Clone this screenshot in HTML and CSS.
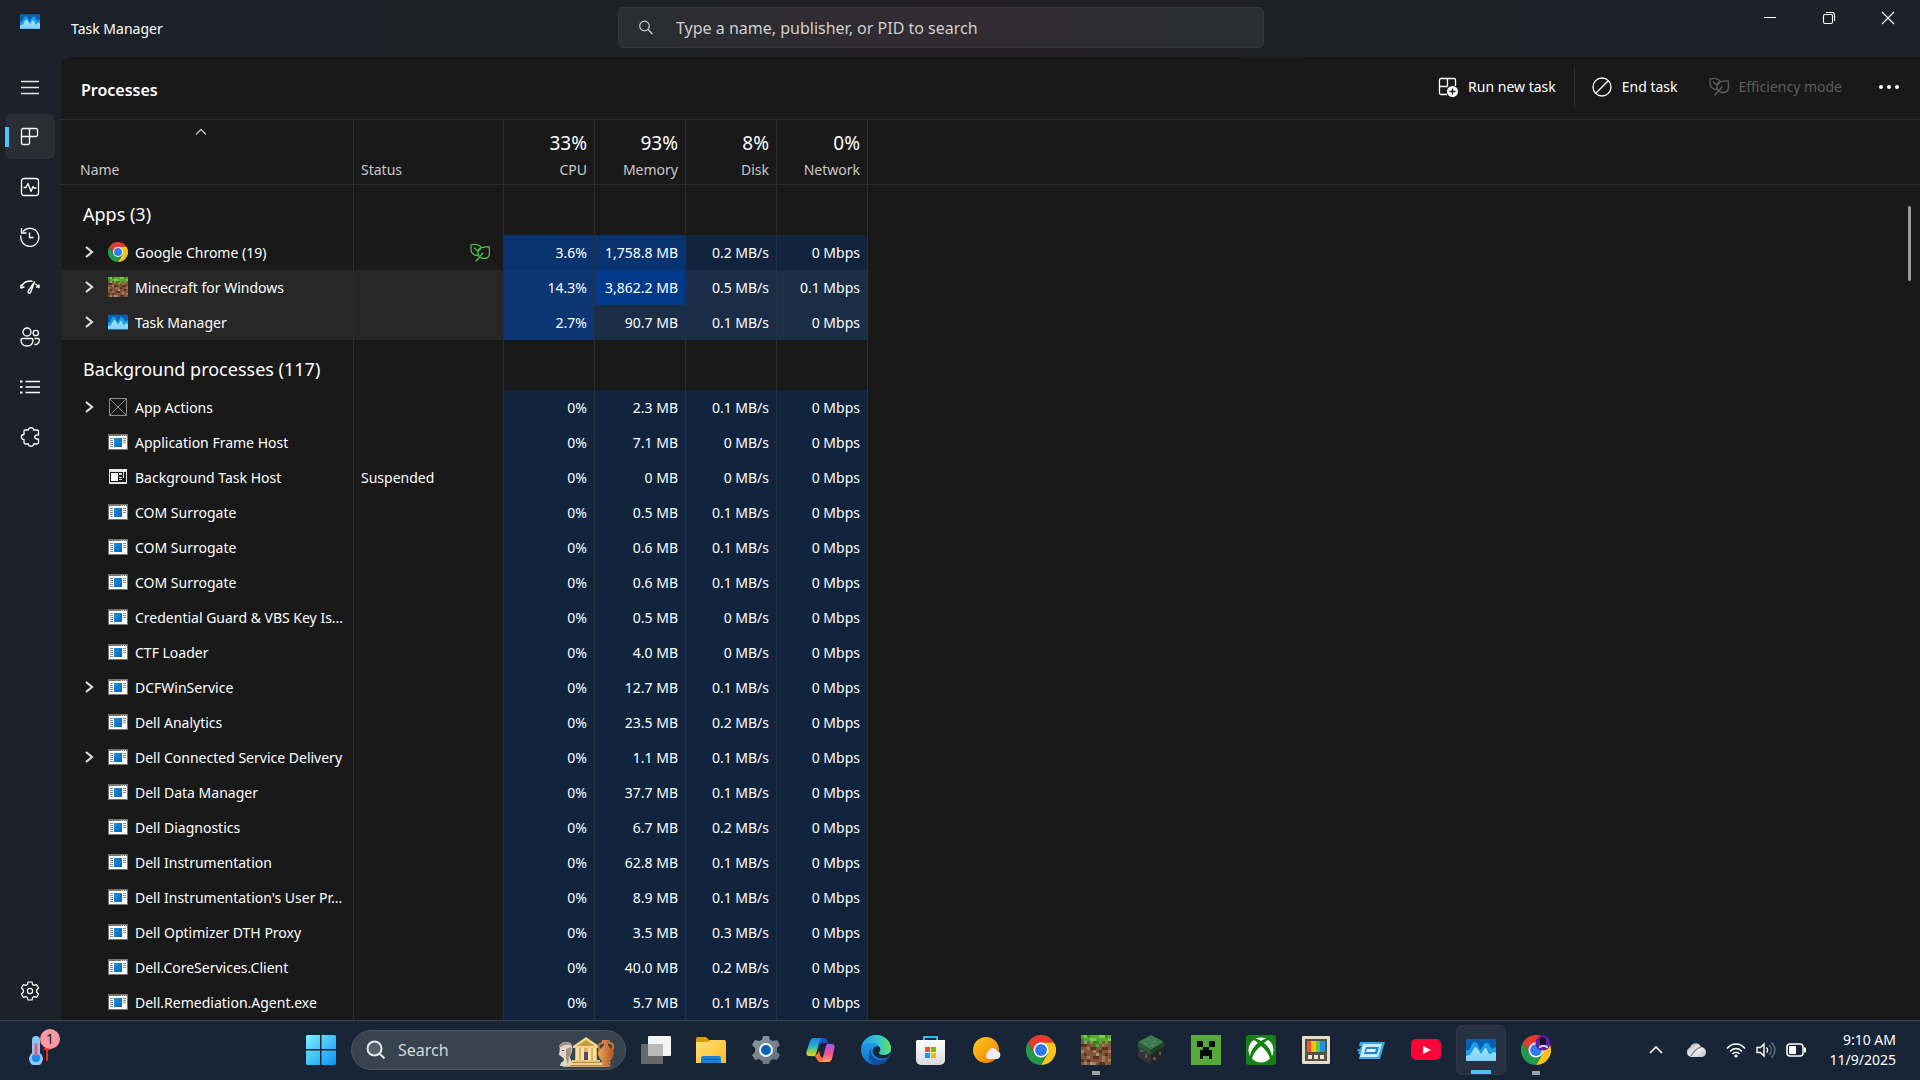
FILE: index.html
```
<!DOCTYPE html>
<html lang="en">
<head>
<meta charset="utf-8">
<title>Task Manager</title>
<link rel="stylesheet" href="styles.css">
</head>
<body>
<svg class="sprite" width="0" height="0" aria-hidden="true">
  <defs>
    <linearGradient id="g-tm" x1="0" y1="0" x2="0" y2="1"><stop offset="0" stop-color="#0a62b8"/><stop offset="1" stop-color="#0a55a5"/></linearGradient>
    <linearGradient id="g-tm2" x1="0" y1="0" x2="0" y2="1"><stop offset="0" stop-color="#a8e4ff"/><stop offset="1" stop-color="#7fd0fb"/></linearGradient>
    <linearGradient id="g-win" x1="0" y1="0" x2="1" y2="1"><stop offset="0" stop-color="#1c94e4"/><stop offset="1" stop-color="#0463b8"/></linearGradient>
    <linearGradient id="g-start" x1="0" y1="0" x2="30" y2="30" gradientUnits="userSpaceOnUse"><stop offset="0" stop-color="#7df0fd"/><stop offset="1" stop-color="#0a94f8"/></linearGradient>
    <linearGradient id="g-folder" x1="0" y1="0" x2="1" y2="1"><stop offset="0" stop-color="#ffe07a"/><stop offset="1" stop-color="#fcbd2a"/></linearGradient>
    <linearGradient id="g-gear" x1="0" y1="0" x2="1" y2="1"><stop offset="0" stop-color="#939da6"/><stop offset="1" stop-color="#5d6973"/></linearGradient>
    <linearGradient id="g-edge1" x1="0" y1="0" x2="1" y2="0"><stop offset="0" stop-color="#1f9be0"/><stop offset=".55" stop-color="#2cc3cf"/><stop offset="1" stop-color="#66e35e"/></linearGradient>
    <linearGradient id="g-edge2" x1="0" y1="0" x2="0" y2="1"><stop offset="0" stop-color="#2aa6ea"/><stop offset="1" stop-color="#0b6fd0"/></linearGradient>
    <linearGradient id="g-cop1" x1="0" y1="0" x2="0" y2="1"><stop offset="0" stop-color="#1a85e8"/><stop offset=".45" stop-color="#23b5c9"/><stop offset=".75" stop-color="#8fd04e"/><stop offset="1" stop-color="#f4cf1c"/></linearGradient>
    <linearGradient id="g-cop2" x1="0" y1="0" x2="0" y2="1"><stop offset="0" stop-color="#a654f0"/><stop offset=".5" stop-color="#ee4f9c"/><stop offset="1" stop-color="#fda24f"/></linearGradient>
    <linearGradient id="g-sun" x1="0" y1="0" x2="1" y2="1"><stop offset="0" stop-color="#ffd21a"/><stop offset="1" stop-color="#ef7407"/></linearGradient>
    <linearGradient id="g-store" x1="0" y1="0" x2="0" y2="1"><stop offset="0" stop-color="#ffffff"/><stop offset="1" stop-color="#d9dadc"/></linearGradient>
    <linearGradient id="g-cloud" x1="0" y1="0" x2="1" y2="1"><stop offset="0" stop-color="#9a9c9e"/><stop offset=".5" stop-color="#f2f2f2"/><stop offset="1" stop-color="#b9bbbd"/></linearGradient>
    <linearGradient id="g-vase" x1="0" y1="0" x2="1" y2="0"><stop offset="0" stop-color="#f2a25f"/><stop offset="1" stop-color="#a9551f"/></linearGradient>
  </defs>
  <symbol id="i-tm" viewBox="0 0 30 22">
    <path fill="url(#g-tm)" d="M1 0h28l1 1v20l-1 1H1l-1-1V1z"/>
    <path fill="#1d9fe6" d="M0 11h3l3-6 2-2 3 1 3 7 5-7h3l4 6 4-2v14H0z"/>
    <path fill="url(#g-tm2)" d="M0 17l4-1 5-8 2 1 4 6 4-6h1l3 6h2l2-2 3 1v8H0z"/>
  </symbol>
  <symbol id="i-win" viewBox="0 0 20 16">
    <path fill="#fff" d="M0 0h20v16H0z"/><path fill="#77746f" d="M0 0h20v2H0zM0 2h1v14H0zM19 2h1v14h-1zM1 15h18v1H1z"/>
    <path fill="#d0d0d0" d="M13 1h1v1h-1zM15 1h1v1h-1zM17 1h1v1h-1z"/>
    <path fill="#8d8d8d" d="M2 4h3v1H2zM2 6h3v1H2zM2 8h3v1H2zM2 10h3v1H2zM2 12h3v1H2zM15 4h3v1h-3zM15 6h3v1h-3zM15 8h3v1h-3z"/>
    <path fill="url(#g-win)" d="M6 4h8v9H6z"/>
  </symbol>
  <symbol id="i-host" viewBox="0 0 20 16">
    <path fill="#e9e9e9" d="M1 0h18v15H1z"/><path fill="#1a1a1a" d="M2 3h16v10H2z"/><path fill="#fff" d="M3 4h7v8H3z"/><path fill="#d8d8d8" d="M11 4h3v2h-3zM11 8h3v1h-3zM11 10h3v1h-3zM15 3h1v6h-1zM2 13h16v1H2z"/>
  </symbol>
  <symbol id="i-blank" viewBox="0 0 20 20">
    <path fill="none" stroke="#8c8c8c" d="M1.500 1.500h17v17h-17zM2 2l16 16M18 2L2 18"/>
  </symbol>
  <symbol id="i-chrome" viewBox="0 0 48 48">
    <path fill="#e33b2e" d="M3.200 12L13.600 30 24 12h20.800A24 24 0 0 0 3.200 12z"/>
    <path fill="#fcc31e" d="M44.800 12A24 24 0 0 1 24 48l10.400-18L24 12z"/>
    <path fill="#239a4b" d="M3.200 12A24 24 0 0 0 24 48l10.400-18L24 34 13.600 30z"/>
    <circle cx="24" cy="24" r="12" fill="#fff"/><circle cx="24" cy="24" r="9.500" fill="#2f7bed"/>
  </symbol>
  <symbol id="i-grass" viewBox="0 0 10 10">
    <g shape-rendering="crispEdges"><path fill="#80563b" d="M0 0h10v10H0z"/>
    <path fill="#55a832" d="M0 0h10v2H9v1H8V2H7v1H6v1H5V2H4v1H3V2H0z"/>
    <path fill="#7cc94c" d="M1 0h1v1H1zM3 1h2v1H3zM6 0h2v1H6zM9 1h1v1H9z"/>
    <path fill="#3c8a25" d="M2 0h1v1H2zM5 2h1v1H5zM8 0h1v1H8zM0 1h1v1H0z"/>
    <path fill="#553521" d="M0 3h2v1H0zM3 4h2v1H3zM7 4h2v1H7zM1 6h1v1H1zM4 7h2v1H4zM8 6h1v1H8zM0 8h1v1H0zM6 9h2v1H6zM2 8h1v1H2zM6 5h1v1H6z"/>
    <path fill="#a87752" d="M2 4h1v1H2zM4 5h1v1H4zM0 5h1v1H0zM7 3h1v1H7zM9 5h1v1H9zM2 7h1v1H2zM7 7h1v2H7zM4 9h1v1H4zM9 8h1v1H9zM1 9h1v1H1z"/>
    <path fill="#9b9490" d="M1 2h1v1H1zM5 6h1v1H5zM3 9h1v1H3z"/></g>
  </symbol>
  <symbol id="i-chev" viewBox="0 0 10 12"><path fill="none" stroke="#dcdcdc" stroke-width="2.200" d="M1 1l6 5-6 5"/></symbol>
  <symbol id="i-leaf" viewBox="0 0 20 20">
    <path fill="none" stroke="currentColor" stroke-width="1.300" stroke-linecap="round" stroke-linejoin="round" d="M7 12.500C3.500 12 1 9.500 1 6V2C3.500 1 6 1.200 8 2c1.500.6 2.500 1.200 3.200 2.200M4.500 5l3.500 3.500V12M8 8.500L10.500 6M19.300 4c-2.500-.6-4.500.1-6.300.3-3 .2-5 2-5 5 0 4.200 2.500 6.200 6 6.200 3.700 0 5.500-2.500 5.500-6zM6 18l7-8"/>
  </symbol>
</svg>

<div class="app">
  <header class="titlebar">
    <div class="brand">
      <svg width="20" height="15"><use href="#i-tm"/></svg>
      <span>Task Manager</span>
    </div>
    <label class="search">
      <svg width="16" height="16" viewBox="0 0 16 16" fill="none" stroke="#cfcfcf" stroke-width="1.200"><circle cx="6.500" cy="6" r="4.800"/><path d="M10 9.500l4.500 4.500"/></svg>
      <input type="text" aria-label="Search processes" placeholder="Type a name, publisher, or PID to search">
    </label>
    <div class="win-buttons">
      <button aria-label="Minimize"><svg width="14" height="14" viewBox="0 0 14 14"><path fill="#fff" d="M1 6h12v1H1z"/></svg></button>
      <button aria-label="Restore"><svg width="14" height="14" viewBox="0 0 14 14" fill="none" stroke="#fff" stroke-width="1.100"><rect x="1.500" y="3.500" width="9" height="9" rx="1.500"/><path d="M4 1.500h6a2.500 2.500 0 0 1 2.500 2.500v6"/></svg></button>
      <button aria-label="Close"><svg width="14" height="14" viewBox="0 0 14 14" stroke="#fff" stroke-width="1.200"><path d="M1 1l12 12M13 1L1 13"/></svg></button>
    </div>
  </header>

  <div class="body">
    <nav class="rail" aria-label="Pages">
      <button class="rail-item" aria-label="Open navigation"><svg width="20" height="20" viewBox="0 0 20 20"><path fill="none" stroke="#e8e8e8" stroke-width="1.300" d="M1 4.500h18M1 10.500h18M1 16.500h18"/></svg></button>
      <button class="rail-item active" aria-label="Processes"><svg width="20" height="20" viewBox="0 0 20 20" fill="none" stroke="#fff" stroke-width="1.300"><path d="M3 1.500h13a1.500 1.500 0 0 1 1.500 1.500v5A1.500 1.500 0 0 1 16 9.500H9.500V16A1.500 1.500 0 0 1 8 17.500H3A1.500 1.500 0 0 1 1.500 16V3A1.500 1.500 0 0 1 3 1.500zM9.500 1.500v8h-8"/></svg></button>
      <button class="rail-item" aria-label="Performance"><svg width="20" height="20" viewBox="0 0 20 20" fill="none" stroke="#fff" stroke-width="1.300" stroke-linejoin="round"><rect x="1.500" y="1.500" width="17" height="17" rx="2.500"/><path d="M3.500 10.500h2.500l2-4 3 8 2-5 1 1.500h2.500"/></svg></button>
      <button class="rail-item" aria-label="App history"><svg width="20" height="20" viewBox="0 0 20 20" fill="none" stroke="#fff" stroke-width="1.300"><path d="M1 8.500A9 9 0 1 0 3 4.500M1.500 1v5h5M9.500 5.500v5h4"/></svg></button>
      <button class="rail-item" aria-label="Startup apps"><svg width="20" height="20" viewBox="0 0 20 20" fill="none" stroke="#fff" stroke-width="1.400" stroke-linecap="round" stroke-linejoin="round"><path d="M1 10.500C3 5.500 7 3.500 12 4.200M1 8v3l3-1M14.500 5L8.300 14c-.7 1.200.6 3 1.900 1.800.8-.8 2.600-6.800 4.300-10.800zM15.500 7c1.500.8 2.500 2 3.500 3.700M16.500 10h2.500V8"/></svg></button>
      <button class="rail-item" aria-label="Users"><svg width="20" height="20" viewBox="0 0 20 20" fill="none" stroke="#fff" stroke-width="1.300"><circle cx="7" cy="5" r="4"/><circle cx="15.800" cy="6" r="2.700"/><path d="M2.500 11.500h9A1.500 1.500 0 0 1 13 13c0 4-2.500 6-6 6s-6-2-6-6a1.500 1.500 0 0 1 1.500-1.500zM14.500 11.500h3.700a1.200 1.200 0 0 1 1.200 1.200c0 3.300-2 5-5 4.800"/></svg></button>
      <button class="rail-item" aria-label="Details"><svg width="20" height="20" viewBox="0 0 20 20"><path fill="none" stroke="#fff" stroke-width="1.300" d="M5.500 4.500h14.500M5.500 10h14.500M5.500 15.500h14.500"/><path fill="#fff" d="M0 3.500h2.500v2H0zM0 9h2.500v2H0zM0 14.500h2.500v2H0z"/></svg></button>
      <button class="rail-item" aria-label="Services"><svg width="20" height="20" viewBox="0 0 20 20" fill="none" stroke="#fff" stroke-width="1.300" stroke-linejoin="round"><path d="M5 3h3.500c-.5-3 5.500-3 5 0H17a1.500 1.500 0 0 1 1.500 1.500V8c-5-1-5 5 0 4v3.500A1.500 1.500 0 0 1 17 17h-3.500c.5 3-5.500 3-5 0H5.500A1.500 1.500 0 0 1 4 15.500V12.500c-3.500 0-3.500-5 0-5V4a1 1 0 0 1 1-1z"/></svg></button>
      <button class="rail-item last" aria-label="Settings"><svg width="20" height="20" viewBox="0 0 20 20" fill="none" stroke="#fff" stroke-width="1.200" stroke-linejoin="round"><path d="M8 1h4l.6 2.500 1.500.9 2.500-.8 2 3.400-1.900 1.800v2.400l1.900 1.800-2 3.400-2.500-.8-1.500.9L12 19H8l-.6-2.500-1.500-.9-2.500.8-2-3.400 1.900-1.800V8.800L1.400 7l2-3.400 2.500.8 1.500-.9z"/><circle cx="10" cy="10" r="2.600"/></svg></button>
    </nav>

    <main class="panel">
      <div class="toolbar">
        <h1>Processes</h1>
        <button class="tool"><svg width="20" height="20" viewBox="0 0 20 20" fill="none" stroke="#fff" stroke-width="1.300"><path d="M9 17.500H3A1.500 1.500 0 0 1 1.500 16V3A1.500 1.500 0 0 1 3 1.500h13A1.500 1.500 0 0 1 17.500 3v6M9.500 1.500v8M1.500 9.500h8"/><circle cx="14.500" cy="14.500" r="5.500" fill="#fff" stroke="none"/><path stroke="#191919" d="M11.500 14.500h6M14.500 11.500v6"/></svg>Run new task</button>
        <span class="divider"></span>
        <button class="tool"><svg width="20" height="20" viewBox="0 0 20 20" fill="none" stroke="#fff" stroke-width="1.300"><circle cx="10" cy="10" r="9"/><path d="M3.800 16.200L16.200 3.800"/></svg>End task</button>
        <button class="tool" disabled><svg width="20" height="20"><use href="#i-leaf"/></svg>Efficiency mode</button>
        <button class="more" aria-label="More options"><svg width="20" height="20" viewBox="0 0 20 20" fill="#fff"><circle cx="2" cy="10" r="2"/><circle cx="10" cy="10" r="2"/><circle cx="18" cy="10" r="2"/></svg></button>
      </div>

      <div class="list">
        <table>
          <colgroup><col class="c-name"><col class="c-status"><col class="c-num"><col class="c-num"><col class="c-num"><col class="c-num"><col></colgroup>
          <thead><tr>
            <th class="name"><svg class="sort" width="12" height="8" viewBox="0 0 12 8"><path fill="none" stroke="#c4c4c4" stroke-width="1.300" d="M1 6.500l5-5 5 5"/></svg>Name</th>
            <th>Status</th>
            <th class="num"><b>33%</b>CPU</th><th class="num"><b>93%</b>Memory</th><th class="num"><b>8%</b>Disk</th><th class="num"><b>0%</b>Network</th><td></td>
          </tr></thead>
          <tbody>
            <tr class="group"><th>Apps (3)</th><td></td><td></td><td></td><td></td><td></td><td></td></tr>
            <tr><td><div class="cell"><svg class="chev" width="10" height="12"><use href="#i-chev"/></svg><svg width="20" height="20"><use href="#i-chrome"/></svg><span>Google Chrome (19)</span></div></td><td><svg class="eco" width="20" height="20"><use href="#i-leaf"/></svg></td><td class="mid">3.6%</td><td class="mid">1,758.8 MB</td><td class="low">0.2 MB/s</td><td class="low">0 Mbps</td><td></td></tr>
            <tr class="lit"><td><div class="cell"><svg class="chev" width="10" height="12"><use href="#i-chev"/></svg><svg width="20" height="20"><use href="#i-grass"/></svg><span>Minecraft for Windows</span></div></td><td></td><td class="mid">14.3%</td><td class="high">3,862.2 MB</td><td class="low">0.5 MB/s</td><td class="low">0.1 Mbps</td><td></td></tr>
            <tr class="lit"><td><div class="cell"><svg class="chev" width="10" height="12"><use href="#i-chev"/></svg><svg width="20" height="16" viewBox="0 0 20 16"><use href="#i-tm"/></svg><span>Task Manager</span></div></td><td></td><td class="mid">2.7%</td><td class="low">90.7 MB</td><td class="low">0.1 MB/s</td><td class="low">0 Mbps</td><td></td></tr>
            <tr class="group"><th>Background processes (117)</th><td></td><td></td><td></td><td></td><td></td><td></td></tr>
            <tr><td><div class="cell"><svg class="chev" width="10" height="12"><use href="#i-chev"/></svg><svg width="20" height="20"><use href="#i-blank"/></svg><span>App Actions</span></div></td><td></td><td class="low">0%</td><td class="low">2.3 MB</td><td class="low">0.1 MB/s</td><td class="low">0 Mbps</td><td></td></tr>
            <tr><td><div class="cell single"><svg width="20" height="16"><use href="#i-win"/></svg><span>Application Frame Host</span></div></td><td></td><td class="low">0%</td><td class="low">7.1 MB</td><td class="low">0 MB/s</td><td class="low">0 Mbps</td><td></td></tr>
            <tr><td><div class="cell single"><svg width="20" height="16"><use href="#i-host"/></svg><span>Background Task Host</span></div></td><td>Suspended</td><td class="low">0%</td><td class="low">0 MB</td><td class="low">0 MB/s</td><td class="low">0 Mbps</td><td></td></tr>
            <tr><td><div class="cell single"><svg width="20" height="16"><use href="#i-win"/></svg><span>COM Surrogate</span></div></td><td></td><td class="low">0%</td><td class="low">0.5 MB</td><td class="low">0.1 MB/s</td><td class="low">0 Mbps</td><td></td></tr>
            <tr><td><div class="cell single"><svg width="20" height="16"><use href="#i-win"/></svg><span>COM Surrogate</span></div></td><td></td><td class="low">0%</td><td class="low">0.6 MB</td><td class="low">0.1 MB/s</td><td class="low">0 Mbps</td><td></td></tr>
            <tr><td><div class="cell single"><svg width="20" height="16"><use href="#i-win"/></svg><span>COM Surrogate</span></div></td><td></td><td class="low">0%</td><td class="low">0.6 MB</td><td class="low">0.1 MB/s</td><td class="low">0 Mbps</td><td></td></tr>
            <tr><td><div class="cell single"><svg width="20" height="16"><use href="#i-win"/></svg><span>Credential Guard &amp; VBS Key Is...</span></div></td><td></td><td class="low">0%</td><td class="low">0.5 MB</td><td class="low">0 MB/s</td><td class="low">0 Mbps</td><td></td></tr>
            <tr><td><div class="cell single"><svg width="20" height="16"><use href="#i-win"/></svg><span>CTF Loader</span></div></td><td></td><td class="low">0%</td><td class="low">4.0 MB</td><td class="low">0 MB/s</td><td class="low">0 Mbps</td><td></td></tr>
            <tr><td><div class="cell"><svg class="chev" width="10" height="12"><use href="#i-chev"/></svg><svg width="20" height="16"><use href="#i-win"/></svg><span>DCFWinService</span></div></td><td></td><td class="low">0%</td><td class="low">12.7 MB</td><td class="low">0.1 MB/s</td><td class="low">0 Mbps</td><td></td></tr>
            <tr><td><div class="cell single"><svg width="20" height="16"><use href="#i-win"/></svg><span>Dell Analytics</span></div></td><td></td><td class="low">0%</td><td class="low">23.5 MB</td><td class="low">0.2 MB/s</td><td class="low">0 Mbps</td><td></td></tr>
            <tr><td><div class="cell"><svg class="chev" width="10" height="12"><use href="#i-chev"/></svg><svg width="20" height="16"><use href="#i-win"/></svg><span>Dell Connected Service Delivery</span></div></td><td></td><td class="low">0%</td><td class="low">1.1 MB</td><td class="low">0.1 MB/s</td><td class="low">0 Mbps</td><td></td></tr>
            <tr><td><div class="cell single"><svg width="20" height="16"><use href="#i-win"/></svg><span>Dell Data Manager</span></div></td><td></td><td class="low">0%</td><td class="low">37.7 MB</td><td class="low">0.1 MB/s</td><td class="low">0 Mbps</td><td></td></tr>
            <tr><td><div class="cell single"><svg width="20" height="16"><use href="#i-win"/></svg><span>Dell Diagnostics</span></div></td><td></td><td class="low">0%</td><td class="low">6.7 MB</td><td class="low">0.2 MB/s</td><td class="low">0 Mbps</td><td></td></tr>
            <tr><td><div class="cell single"><svg width="20" height="16"><use href="#i-win"/></svg><span>Dell Instrumentation</span></div></td><td></td><td class="low">0%</td><td class="low">62.8 MB</td><td class="low">0.1 MB/s</td><td class="low">0 Mbps</td><td></td></tr>
            <tr><td><div class="cell single"><svg width="20" height="16"><use href="#i-win"/></svg><span>Dell Instrumentation's User Pr...</span></div></td><td></td><td class="low">0%</td><td class="low">8.9 MB</td><td class="low">0.1 MB/s</td><td class="low">0 Mbps</td><td></td></tr>
            <tr><td><div class="cell single"><svg width="20" height="16"><use href="#i-win"/></svg><span>Dell Optimizer DTH Proxy</span></div></td><td></td><td class="low">0%</td><td class="low">3.5 MB</td><td class="low">0.3 MB/s</td><td class="low">0 Mbps</td><td></td></tr>
            <tr><td><div class="cell single"><svg width="20" height="16"><use href="#i-win"/></svg><span>Dell.CoreServices.Client</span></div></td><td></td><td class="low">0%</td><td class="low">40.0 MB</td><td class="low">0.2 MB/s</td><td class="low">0 Mbps</td><td></td></tr>
            <tr><td><div class="cell single"><svg width="20" height="16"><use href="#i-win"/></svg><span>Dell.Remediation.Agent.exe</span></div></td><td></td><td class="low">0%</td><td class="low">5.7 MB</td><td class="low">0.1 MB/s</td><td class="low">0 Mbps</td><td></td></tr>
          </tbody>
        </table>
        <div class="scrollbar"></div>
      </div>
    </main>
  </div>

  <footer class="taskbar">
    <button class="weather" aria-label="Weather, 1 alert">
      <svg width="24" height="30" viewBox="0 0 24 30"><path fill="#8cc4fb" d="M3 5a4 4 0 0 1 8 0v13a7 7 0 1 1-8 0z"/><circle cx="7" cy="23" r="4" fill="#1a8ae6"/><rect x="5.500" y="8" width="3" height="13" rx="1.500" fill="#ef5a6e"/><path fill="#f5261d" d="M17 26h2V15h3l-4-5-4 5h3z"/></svg>
      <span class="badge">1</span>
    </button>

    <div class="dock">
      <button class="task" aria-label="Start"><svg width="30" height="30" viewBox="0 0 30 30"><path fill="url(#g-start)" d="M1 0h13v14H0V1zM15.500 0H29l1 1v13H15.500zM0 15.500h14V30H1l-1-1zM15.500 15.500H30V29l-1 1H15.500z"/></svg></button>
      <label class="pill">
        <svg width="20" height="20" viewBox="0 0 20 20" fill="none" stroke="#e4e7ea" stroke-width="2"><circle cx="8.500" cy="8.500" r="7" fill="#56606b"/><path d="M13.500 13.500l5 5"/></svg>
        <input type="text" aria-label="Search" placeholder="Search">
        <svg width="58" height="40" viewBox="0 0 58 40">
          <path fill="#cba56f" d="M3 32h50l-4 5H5z"/>
          <path fill="#dcd5c9" d="M2 36c0-4 4-4 4-7l-2-2-3-2 1-8c1-6 11-7 12-1 1 5-1 8-2 11 0 3 3 4 3 9z"/><path fill="#a1927e" d="M8 19l5-2c1 4 0 8-2 10l-1 8-2-7zM1 16c2-5 9-6 12-1-4-1-8 0-12 3z"/><path fill="#4e4a46" d="M4 20h2v1H4z"/>
          <path fill="#f3d58a" d="M15 16l13-9 13 9v2H15z"/><path fill="#c99b4a" d="M19 16l9-6 9 6z"/><path fill="#d9b365" d="M17 18h22v13H17z"/><path fill="#f7e2a3" d="M18 18h3v13h-3zM23 18h3v13h-3zM30 18h3v13h-3zM35 18h3v13h-3z"/><path fill="#5c4573" d="M26 22h4v9h-4z"/><path fill="#eac57b" d="M14 30h28v3H14z"/><path fill="#b98b45" d="M14 32h28v1H14zM12 35h32v1H12z"/><path fill="#f0cf86" d="M12 33h32v2H12z"/>
          <path fill="none" stroke="#c9763a" stroke-width="2" d="M45 13c-5 0-5 4-3 7M51 13c5 0 5 4 3 7"/><path fill="url(#g-vase)" d="M44 10h8v2l-2 2c0 4 6 4 6 9s-4 7-5 10l2 4h-10l2-4c-1-3-5-5-5-10s6-5 6-9l-2-2z"/>
        </svg>
      </label>
      <button class="task" aria-label="Task view"><svg width="30" height="30" viewBox="0 0 30 30"><rect y="9" width="22" height="20" rx="1" fill="#686868"/><rect x="7" y="1" width="23" height="20" rx="1" fill="#f4f4f4"/><path fill="#b9b9b9" d="M7 9h15v12H8l-1-1z"/></svg></button>
      <button class="task" aria-label="File Explorer"><svg width="30" height="30" viewBox="0 0 30 30"><path fill="#dd9a07" d="M0 4a2 2 0 0 1 2-2h8l3 3v4H0z"/><path fill="url(#g-folder)" d="M0 7h12l2-2h14a2 2 0 0 1 2 2v21H0z"/><path fill="#1282d8" d="M5 28v-5a2 2 0 0 1 2-2h16a2 2 0 0 1 2 2v5z"/><path fill="#0b57a0" d="M8 24h14v1H8z"/></svg></button>
      <button class="task" aria-label="Settings"><svg width="30" height="30" viewBox="0 0 30 30"><path fill="url(#g-gear)" d="M12 1h6l1 4 3 1 4-1 3 5-3 3v4l3 3-3 5-4-1-3 2-1 3h-6l-1-3-3-2-4 1-3-5 3-3v-4l-3-3 3-5 4 1 3-1z"/><circle cx="15" cy="15" r="7" fill="#f0f3f5"/><circle cx="15" cy="15" r="5" fill="#0c64b4"/></svg></button>
      <button class="task" aria-label="Copilot"><svg width="30" height="30" viewBox="0 0 30 30"><path fill="#1654c9" d="M8 3h10c2 0 3 2 4 5h-6c-2 0-3 2-3 4z"/><path fill="url(#g-cop1)" d="M8 3h8c-3 1-3 5-4 9l-2 7c-1 3-2 2-7 2-3 0-3-3-2-6L4 6c1-2 2-3 4-3z"/><path fill="#fb6f32" d="M8 21c3-1 4-3 5-5l1 3c0 2 0 3 2 3l4 5h-6c-3 0-3-5-6-6z"/><path fill="url(#g-cop2)" d="M22 27h-8c3-1 3-5 4-9l2-7c1-3 2-2 6-2 3 0 3 3 2 6l-2 9c-1 2-2 3-4 3z"/></svg></button>
      <button class="task" aria-label="Edge"><svg width="30" height="30" viewBox="0 0 30 30"><circle cx="15" cy="15" r="15" fill="url(#g-edge2)"/><path fill="url(#g-edge1)" d="M0 14C1 5 8 0 15 0c9 0 15 7 15 13 0 5-4 7-7 7-4 0-5-1-5-2s2-2 1-5c-1-4-5-5-8-5-5 0-9 2-11 6z"/><path fill="#0c4f9c" d="M11 12c-3 5 0 13 9 13 4 0 7-2 8-3-3 6-8 8-13 8-7-1-10-9-4-18z"/><path fill="#182536" d="M18 18c0-2 2-2 1-5-1-2-3-2-5-1-4 2-3 9 4 11 5 1 8 0 10-1l2-5c-2 2-4 3-7 3-4 0-5-1-5-2z"/></svg></button>
      <button class="task" aria-label="Microsoft Store"><svg width="30" height="30" viewBox="0 0 30 30"><path fill="none" stroke="#27bdf4" stroke-width="2" d="M8 7V2h13v5"/><path fill="url(#g-store)" d="M0 6l1-1h28v20a5 5 0 0 1-5 5H5a5 5 0 0 1-5-5z"/><path fill="#f0512b" d="M9 12h5v5H9z"/><path fill="#7db805" d="M15 12h5v5h-5z"/><path fill="#06a1e8" d="M9 18h5v5H9z"/><path fill="#fbb508" d="M15 18h5v5h-5z"/></svg></button>
      <button class="task" aria-label="Weather"><svg width="30" height="30" viewBox="0 0 30 30"><circle cx="15" cy="15" r="13" fill="url(#g-sun)"/><path fill="#ececf0" d="M17 24a4 4 0 0 1 0-7c1-4 7-6 9-1 4 0 5 7 0 8z"/></svg></button>
      <button class="task" aria-label="Chrome"><svg width="30" height="30"><use href="#i-chrome"/></svg></button>
      <button class="task open" aria-label="Minecraft"><svg width="30" height="30"><use href="#i-grass"/></svg></button>
      <button class="task" aria-label="Minecraft Launcher"><svg width="30" height="30" viewBox="0 0 30 30"><path fill="#3e7a4d" d="M2 7L15 0l13 7-13 8z"/><path fill="#333537" d="M2 7l13 8v15L2 22z"/><path fill="#232425" d="M28 7l-13 8v15l13-8z"/><path fill="#29583a" d="M2 7l13 8v4l-3 0-2-3-3 0-2-3-3-1z"/><path fill="#1d4229" d="M28 7l-13 8v4l4-1 2-3 3 0 4-3z"/><path fill="#5b5c5e" d="M4 15h3v2H4zM9 19h2v4H9zM17 22h3v3h-3zM23 17h2v3h-2z"/><path fill="#55956a" d="M11 4h3v1h-3zM17 6h3v1h-3zM8 8h3v1H8zM15 10h3v1h-3z"/></svg></button>
      <button class="task" aria-label="Minecraft Education"><svg width="30" height="30" viewBox="0 0 30 30"><path fill="#58a83a" d="M0 0h30v30H0z"/><path fill="#030a03" d="M6 6h6v6h6V6h6v6h-6v3h3v9h-3v-3h-6v3H9v-9h3v-3H6z"/></svg></button>
      <button class="task" aria-label="Xbox"><svg width="30" height="30" viewBox="0 0 30 30"><rect width="30" height="30" rx="3" fill="#138113"/><circle cx="15" cy="15" r="12.500" fill="#fff"/><path fill="#138113" d="M8 4c3-1 5 1 7 2 2-1 4-3 7-2l2 1c-3 0-4 1-6 3 5 4 8 9 8 15l-2 2c0-5-5-11-9-14-4 3-9 9-9 14l-2-2c0-6 3-11 8-15-2-2-3-3-6-3z"/></svg></button>
      <button class="task" aria-label="PowerToys"><svg width="30" height="30" viewBox="0 0 30 30"><rect x="1" y="1" width="28" height="28" rx="1" fill="#e5ddc8"/><path fill="#55504b" d="M4 4h22v22H4z"/><path fill="#f4512c" d="M6 6h4v11H6z"/><path fill="#ffc40c" d="M10 6h5v11h-5z"/><path fill="#6cc644" d="M15 6h4v11h-4z"/><path fill="#1b94e6" d="M19 6h5v11h-5z"/><path fill="#ede5d0" d="M7 20h4v4H7zM13 20h4v4h-4zM19 20h4v4h-4z"/></svg></button>
      <button class="task" aria-label="Run"><svg width="30" height="30" viewBox="0 0 30 30"><path fill="#3aa8e6" d="M4 7h25l-5 17H3l1-5H2l1-3H1l1-2h2l1-3H3z"/><path fill="#c6ecfc" d="M7 9h19l-4 13H4z"/><path fill="#1b86cf" d="M10 12h13l-2 7H8z"/><path fill="#e3f6fe" d="M11 14h9l-1 3h-9z"/></svg></button>
      <button class="task" aria-label="YouTube"><svg width="30" height="30" viewBox="0 0 30 30"><rect y="4" width="30" height="21" rx="5" fill="#fb0437"/><path fill="#fff" d="M12 11l8 4-8 4z"/></svg></button>
      <button class="task current" aria-label="Task Manager"><svg width="30" height="22"><use href="#i-tm"/></svg></button>
      <button class="task open" aria-label="Chrome profile"><svg width="30" height="30" viewBox="0 0 30 30"><use href="#i-chrome" width="30" height="30"/><circle cx="22" cy="8" r="7.500" fill="#5f1fa6"/><path fill="#1d1129" d="M19 3c2-2 6-1 6 2v5h-6z"/><path fill="#d5c7e6" d="M18 13c0-2 1-3 3-3h3c2 0 3 1 3 3l-2 0-1-1h-3l-1 1z"/></svg></button>
    </div>

    <div class="tray">
      <button class="up" aria-label="Show hidden icons"><svg width="14" height="10" viewBox="0 0 14 10"><path fill="none" stroke="#fff" stroke-width="1.700" d="M1 8l6-6 6 6"/></svg></button>
      <button aria-label="OneDrive"><svg width="20" height="14" viewBox="0 0 20 14"><path fill="url(#g-cloud)" d="M5 14a5 5 0 0 1-1-9.500C6-1 13-1 15 4c6 0 7 9 1 10z"/><path fill="none" stroke="#8b8d90" stroke-width="1.500" d="M5 13c3-5 6-8 10-9"/></svg></button>
      <button class="status" aria-label="Network, volume and battery">
        <svg width="20" height="16" viewBox="0 0 20 16" fill="none" stroke="#fff" stroke-width="1.500"><path d="M1 6.500c5-6 13-6 18 0M4 9.500c3.500-4 8.500-4 12 0M6.500 12c2-2.500 5-2.500 7 0"/><circle cx="10" cy="14" r="1.600" fill="#fff" stroke="none"/></svg>
        <svg width="20" height="18" viewBox="0 0 20 18" fill="none" stroke="#fff" stroke-width="1.400"><path d="M1 6.500h3.500L8 3v12l-3.500-3.500H1zM10.500 6.500c1.500 1.500 1.500 3.500 0 5"/><path stroke="#66717d" d="M13 4c3 3 3 7 0 10M15.500 1.500c4.500 4.500 4.500 10.500 0 15"/></svg>
        <svg width="20" height="14" viewBox="0 0 20 14"><rect x="1" y="1" width="16" height="12" rx="3" fill="none" stroke="#fff" stroke-width="1.500"/><rect x="3" y="3" width="7" height="8" rx="1" fill="#fff"/><path fill="#fff" d="M18 4l2 1v4l-2 1z"/></svg>
      </button>
      <button class="clock"><span>9:10 AM</span><span>11/9/2025</span></button>
    </div>
  </footer>
</div>
</body>
</html>
```
FILE: styles.css
```
* { box-sizing: border-box; }

body {
  margin: 0;
  background: #1d2129;
  color: #fff;
  font: 14px/20px "Noto Sans", "Open Sans", sans-serif;
}

button,
input {
  margin: 0;
  padding: 0;
  border: 0;
  background: none;
  color: inherit;
  font: inherit;
}

svg { display: block; flex: none; }

.sprite { position: absolute; }

.app {
  display: flex;
  flex-direction: column;
  height: 100vh;
  overflow: hidden;
}

/* title bar */
.titlebar {
  display: grid;
  grid-template-columns: 618fr 646px 656fr;
  height: 57px;
  flex: none;
  background: linear-gradient(90deg, #1c2129 0%, #1d2128 28%, #231f24 50%, #1e2026 68%, #1d2322 74%, #1d2129 80%);
}

.brand {
  display: flex;
  gap: 31px;
  padding: 14px 0 0 20px;
}

.brand span { padding-top: 5px; }

.search {
  display: flex;
  align-items: center;
  gap: 22px;
  height: 41px;
  margin-top: 7px;
  padding: 0 19px;
  border: 1px solid #36373c;
  border-radius: 5px;
  background: linear-gradient(90deg, #2b2d33, #302c31 40%, #302c31 55%, #2b2e33);
}

.search input {
  flex: 1;
  outline: 0;
  font-size: 16px;
}

.search input::placeholder { color: #cfcfcf; opacity: 1; }

.win-buttons {
  display: flex;
  justify-content: flex-end;
  align-items: flex-start;
  padding-right: 3px;
}

.win-buttons button {
  display: grid;
  place-items: center;
  width: 59px;
  height: 36px;
}

/* navigation rail */
.body {
  display: flex;
  flex: 1;
  min-height: 0;
}

.rail {
  display: flex;
  flex-direction: column;
  align-items: center;
  gap: 5px;
  width: 61px;
  padding: 7px 1px 7px 0;
  flex: none;
}

.rail-item {
  display: grid;
  place-items: center;
  width: 50px;
  height: 45px;
  border-radius: 6px;
}

.rail-item.active {
  background: linear-gradient(#4cc2ff, #4cc2ff) 0 50% / 4px 20px no-repeat #2b2e35;
}

.rail-item.last { margin-top: auto; }

/* page */
.panel {
  display: flex;
  flex-direction: column;
  flex: 1;
  min-width: 0;
  border-top-left-radius: 10px;
  background: #191919;
}

.toolbar {
  display: flex;
  align-items: center;
  height: 63px;
  padding: 0 21px 2px 20px;
  flex: none;
  border-bottom: 1px solid #2b2d32;
}

.toolbar h1 {
  margin: 6px auto 0 0;
  font-size: 16px;
  font-weight: 600;
  line-height: 24px;
}

.tool {
  display: flex;
  align-items: center;
  gap: 10px;
}

.tool:disabled { color: #5d5d5d; }

.divider {
  width: 1px;
  height: 40px;
  margin: 0 17px 0 18px;
  background: #2e2e2e;
}

.divider ~ .tool { margin-right: 31px; }

.more { margin-left: 6px; }

/* process list */
.list {
  position: relative;
  flex: 1;
  min-height: 0;
  overflow: hidden;
}

table {
  width: 100%;
  table-layout: fixed;
  border-spacing: 0;
}

.c-name { width: 293px; }
.c-status { width: 150px; }
.c-num { width: 91px; }

th,
td {
  height: 35px;
  padding: 0 7px;
  border-right: 1px solid #2c2c2c;
  font-weight: 400;
  text-align: left;
  white-space: nowrap;
}

td:last-child { border-right: 0; }

thead th,
thead td {
  height: 65px;
  padding-bottom: 4px;
  border-bottom: 1px solid #2c2c2c;
  color: #c8c8c8;
  vertical-align: bottom;
}

thead .name { padding-left: 19px; }

.sort { margin: 0 0 24px 115px; }

thead .num { text-align: right; }

.num b {
  display: block;
  color: #fff;
  font-size: 19px;
  font-weight: 400;
  line-height: 34px;
}

.group th,
.group td { height: 50px; }

.group th {
  padding: 8px 0 0 22px;
  font-size: 18px;
}

.cell {
  display: flex;
  align-items: center;
  gap: 7px;
  padding-left: 17px;
}

.cell svg { margin-bottom: 2px; }

.cell .chev { margin-right: 6px; }

.cell.single { padding-left: 40px; }

.eco { margin: 0 6px 0 auto; color: #55b948; }

.low,
.mid,
.high {
  border-color: #24303d;
  text-align: right;
}

.low { background: #10243e; }
.mid { background: #09336f; }
.high { background: #023a8b; }

.lit td { background: #272727; }
.lit .low { background: #1b2e48; }
.lit .mid { background: #0d3774; }
.lit .high { background: #023a8b; }
.lit td:last-child { background: none; }

.scrollbar {
  position: absolute;
  top: 86px;
  right: 9px;
  width: 3px;
  height: 75px;
  border-radius: 2px;
  background: #9a9a9a;
}

/* taskbar */
.taskbar {
  display: grid;
  grid-template-columns: 295fr auto 358fr;
  align-items: center;
  height: 60px;
  padding-bottom: 1px;
  flex: none;
  border-top: 1px solid #3c4650;
  background: #182536;
}

.weather {
  position: relative;
  justify-self: start;
  margin-left: 29px;
}

.badge {
  position: absolute;
  top: -6px;
  left: 11px;
  width: 20px;
  height: 20px;
  border-radius: 10px;
  background: #ff99a4;
  color: #1a1a1a;
}

.dock {
  display: flex;
  align-items: center;
  gap: 5px;
}

.task {
  display: grid;
  place-items: center;
  width: 50px;
  height: 50px;
  border-radius: 6px;
}

.open { background: linear-gradient(#9aa1a8, #9aa1a8) 50% 100% / 8px 4px no-repeat; }

.current {
  border: 1px solid #2d3947;
  background: linear-gradient(#4cc2ff, #4cc2ff) 50% 100% / 20px 4px no-repeat #263241;
}

.pill {
  display: flex;
  align-items: center;
  gap: 12px;
  width: 275px;
  height: 40px;
  padding: 0 9px 0 14px;
  border: 1px solid #4a555f;
  border-radius: 20px;
  background: #37434e;
}

.pill input {
  flex: 1;
  min-width: 0;
  outline: 0;
  font-size: 16px;
}

.pill input::placeholder { color: #d5d8db; opacity: 1; }

.tray {
  display: flex;
  align-items: center;
  justify-self: end;
  gap: 20px;
  padding-right: 24px;
}

.up { margin-right: 3px; }

.status {
  display: flex;
  align-items: center;
  gap: 10px;
}

.clock {
  display: flex;
  flex-direction: column;
  align-items: flex-end;
  margin-left: 4px;
}
```
